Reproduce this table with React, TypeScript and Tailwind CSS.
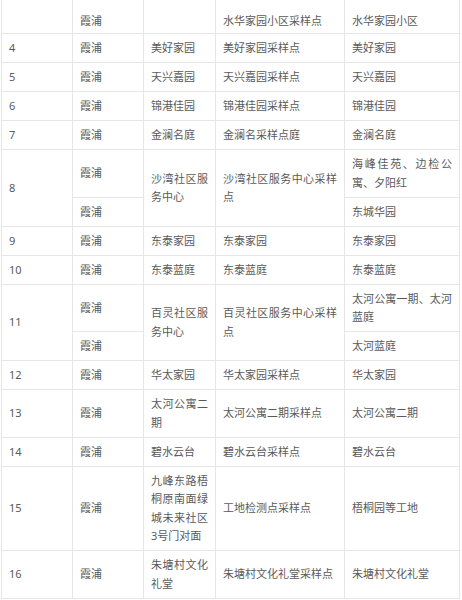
import React from "react";

type Cell = { text: string; rowSpan?: number };

const td =
  "border border-[#e6e6e6] pl-[7px] pr-[7px] pt-[5px] pb-[4.5px] align-middle text-justify";
const topTd =
  "border-x border-b border-[#e6e6e6] pl-[7px] pr-[7px] pt-[12px] pb-[2.5px]";

function Row({ cells }: { cells: (Cell | string)[] }) {
  return (
    <tr>
      {cells.map((c, i) => {
        const cell = typeof c === "string" ? { text: c } : c;
        return (
          <td key={i} rowSpan={cell.rowSpan} className={td}>
            {cell.text}
          </td>
        );
      })}
    </tr>
  );
}

export default function App() {
  return (
    <div className="w-[462px] h-[600px] overflow-hidden bg-white">
      <table
        className="ml-px w-[458px] table-fixed border-collapse text-[11px] leading-[18.5px] text-[#5a5a5a]"
        style={{ fontFamily: '"Noto Sans", "Noto Sans CJK SC", sans-serif' }}
      >
        <colgroup>
          <col className="w-[71px]" />
          <col className="w-[71px]" />
          <col className="w-[72px]" />
          <col className="w-[129px]" />
          <col className="w-[115px]" />
        </colgroup>
        <tbody>
          {/* continuation of row 3, cut off at the top */}
          <tr>
            <td className={topTd} />
            <td className={topTd}>霞浦</td>
            <td className={topTd} />
            <td className={topTd}>水华家园小区采样点</td>
            <td className={topTd}>水华家园小区</td>
          </tr>
          <Row cells={["4", "霞浦", "美好家园", "美好家园采样点", "美好家园"]} />
          <Row cells={["5", "霞浦", "天兴嘉园", "天兴嘉园采样点", "天兴嘉园"]} />
          <Row cells={["6", "霞浦", "锦港佳园", "锦港佳园采样点", "锦港佳园"]} />
          <Row cells={["7", "霞浦", "金澜名庭", "金澜名采样点庭", "金澜名庭"]} />
          <Row
            cells={[
              { text: "8", rowSpan: 2 },
              "霞浦",
              { text: "沙湾社区服务中心", rowSpan: 2 },
              { text: "沙湾社区服务中心采样点", rowSpan: 2 },
              "海峰佳苑、边检公寓、夕阳红",
            ]}
          />
          <Row cells={["霞浦", "东城华园"]} />
          <Row cells={["9", "霞浦", "东泰家园", "东泰家园", "东泰家园"]} />
          <Row cells={["10", "霞浦", "东泰蓝庭", "东泰蓝庭", "东泰蓝庭"]} />
          <Row
            cells={[
              { text: "11", rowSpan: 2 },
              "霞浦",
              { text: "百灵社区服务中心", rowSpan: 2 },
              { text: "百灵社区服务中心采样点", rowSpan: 2 },
              "太河公寓一期、太河蓝庭",
            ]}
          />
          <Row cells={["霞浦", "太河蓝庭"]} />
          <Row cells={["12", "霞浦", "华太家园", "华太家园采样点", "华太家园"]} />
          <Row cells={["13", "霞浦", "太河公寓二期", "太河公寓二期采样点", "太河公寓二期"]} />
          <Row cells={["14", "霞浦", "碧水云台", "碧水云台采样点", "碧水云台"]} />
          <Row
            cells={[
              "15",
              "霞浦",
              "九峰东路梧桐原南面绿城未来社区3号门对面",
              "工地检测点采样点",
              "梧桐园等工地",
            ]}
          />
          <Row cells={["16", "霞浦", "朱塘村文化礼堂", "朱塘村文化礼堂采样点", "朱塘村文化礼堂"]} />
        </tbody>
      </table>
    </div>
  );
}
